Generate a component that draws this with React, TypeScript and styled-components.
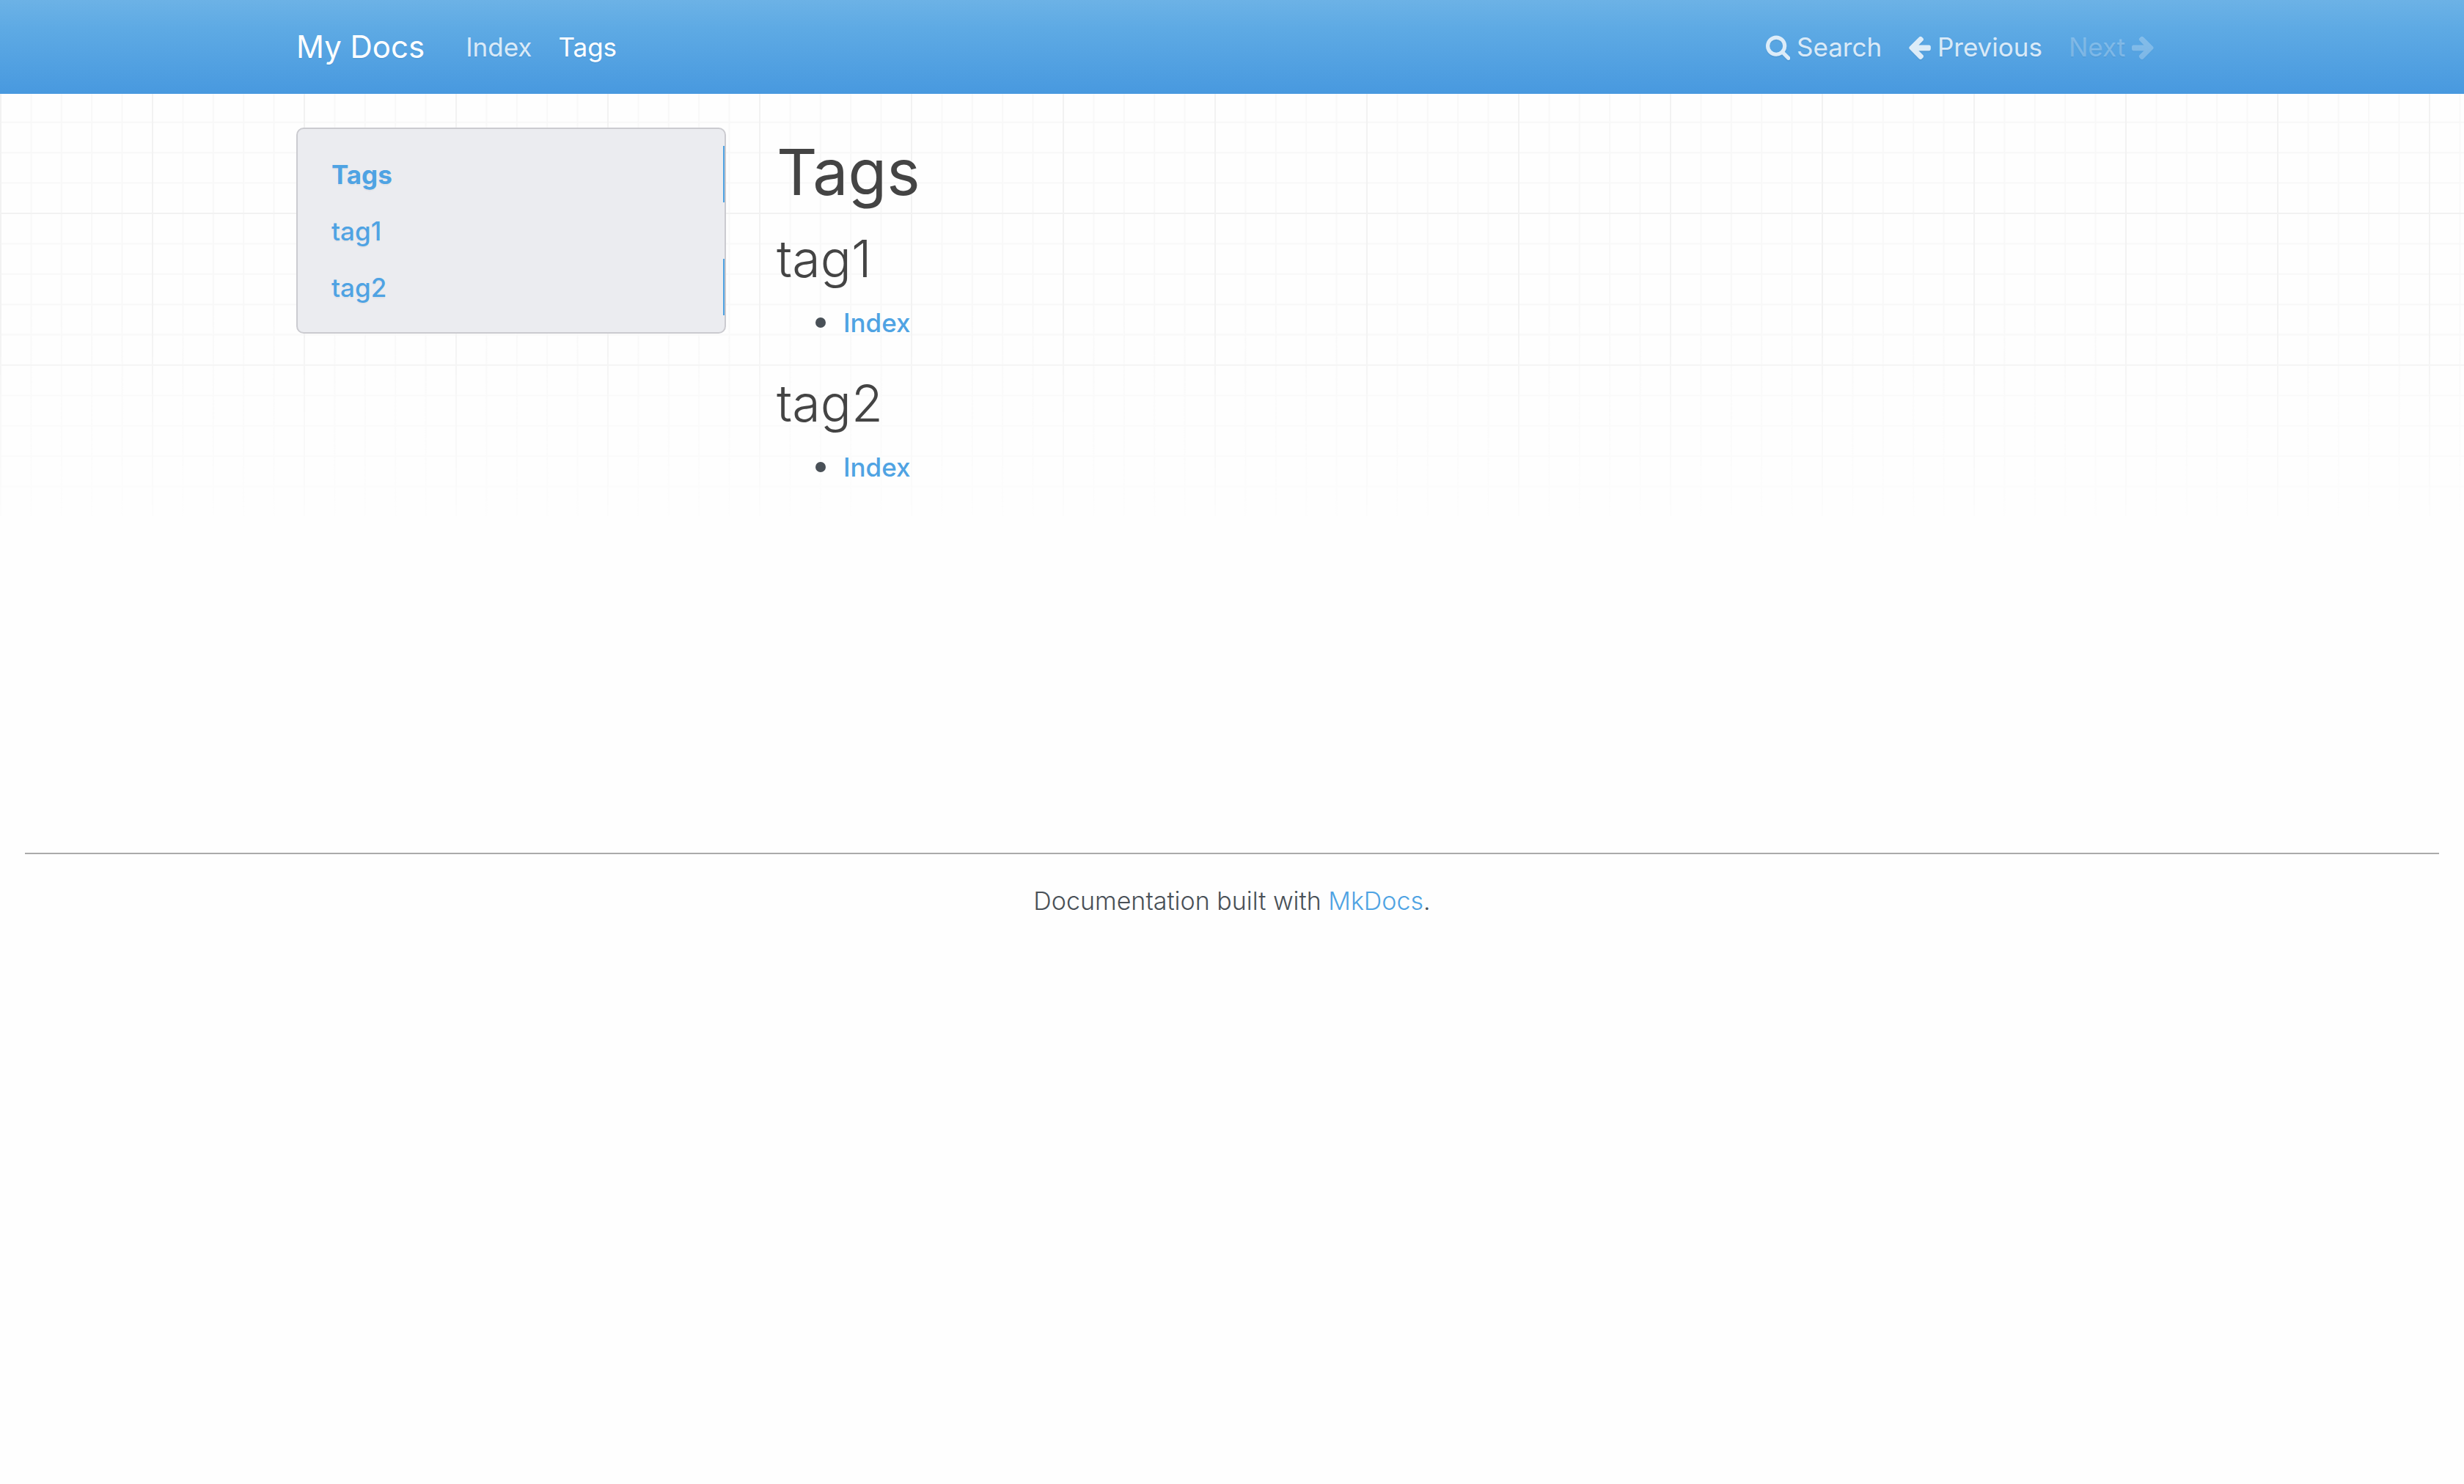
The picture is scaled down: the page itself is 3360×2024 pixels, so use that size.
import React from "react";
import styled, { createGlobalStyle } from "styled-components";

const accent = "#4fa3e3";

const GlobalStyle = createGlobalStyle`
  *, *::before, *::after { box-sizing: border-box; }
  body {
    margin: 0;
    background: #fefefe;
    color: #495057;
    font-family: Inter, "Liberation Sans", sans-serif;
    font-size: 35px;
    font-weight: 400;
    line-height: 56px;
  }
  a { color: ${accent}; text-decoration: none; }
`;

const Page = styled.div`
  position: relative;
`;

const GridBackdrop = styled.div`
  position: absolute;
  inset: 0 0 auto;
  z-index: -1;
  height: 704px;
  mask-image: linear-gradient(#000 60%, rgba(0, 0, 0, 0.15));
`;

const Container = styled.div`
  display: flex;
  width: 100%;
  max-width: 2620px;
  margin: 0 auto;
  padding: 0 34px;
`;

const Navbar = styled.header`
  display: flex;
  height: 128px;
  align-items: center;
  background: linear-gradient(#6cb2e6, #5eaae4 30%, #4899df);
  text-shadow: 0 2px 0 rgba(0, 0, 0, 0.05);
`;

const NavRow = styled(Container)`
  align-items: center;
`;

const Brand = styled.a`
  margin-right: 38px;
  font-size: 42px;
  color: #fff;
`;

const NavGroup = styled.nav<{ $end?: boolean }>`
  display: flex;
  margin-left: ${(p) => (p.$end ? "auto" : "0")};
`;

const NavLink = styled.a<{ $active?: boolean; $disabled?: boolean }>`
  display: flex;
  align-items: center;
  gap: 9px;
  padding: 0 18px;
  color: ${(p) =>
    p.$active ? "#fff" : p.$disabled ? "rgba(255, 255, 255, 0.25)" : "rgba(255, 255, 255, 0.8)"};
`;

const SearchButton = styled(NavLink).attrs({ as: "button", type: "button" })`
  border: 0;
  background: none;
  font: inherit;
  text-shadow: inherit;
`;

const Glyph = styled.svg`
  height: 36px;
  fill: currentColor;
  filter: drop-shadow(0 2px 0 rgba(0, 0, 0, 0.05));
`;

const Body = styled(Container)`
  align-items: flex-start;
  gap: 69px;
  min-height: 1035px;
  padding-top: 46px;
`;

const Sidebar = styled.nav`
  flex: 0 0 586px;
  padding: 23px 0;
  border: 2px solid #cbcbd0;
  border-radius: 10px;
  background: #ebecf0;
`;

const SideLink = styled.a<{ $strong?: boolean; $current?: boolean }>`
  display: block;
  padding: 11px 46px 10px;
  border-right: 2px solid ${(p) => (p.$current ? accent : "transparent")};
  font-weight: ${(p) => (p.$strong ? 700 : 500)};
  text-shadow: 0 2px 0 rgba(0, 0, 0, 0.05);
`;

const Main = styled.main`
  flex: 1;
  padding-top: 4px;
`;

const Title = styled.h1`
  margin: 0 0 18px;
  font-size: 86px;
  font-weight: 400;
  line-height: 114px;
  color: #444;
`;

const Subtitle = styled.h2`
  margin: 0 0 16px;
  font-size: 70px;
  font-weight: 300;
  line-height: 86px;
  color: #444;
`;

const PageList = styled.ul`
  margin: 0 0 39px;
  padding-left: 53px;
  list-style: none;
`;

const PageItem = styled.li`
  display: flex;
  align-items: center;
  gap: 24px;
  font-weight: 500;

  &::before {
    content: "";
    width: 14px;
    height: 14px;
    border-radius: 50%;
    background: currentColor;
  }
`;

const Footer = styled.footer`
  margin: 0 34px;
  padding-top: 36px;
  border-top: 2px solid #aaa;
  font-size: 34px;
  font-weight: 300;
  text-align: center;
`;

const tags = ["tag1", "tag2"];

function Grid() {
  return (
    <GridBackdrop>
      <svg width="100%" height="100%" aria-hidden="true">
        <defs>
          <pattern id="grid" y="83" width="207" height="207" patternUnits="userSpaceOnUse">
            <path
              d="M42.4 0V207M83.8 0V207M125.2 0V207M166.6 0V207M0 42.4H207M0 83.8H207M0 125.2H207M0 166.6H207"
              stroke="#f8f8f8"
              strokeWidth="2"
            />
            <path d="M1 0V207M0 1H207" stroke="#f2f2f2" strokeWidth="2" />
          </pattern>
        </defs>
        <rect width="100%" height="100%" fill="url(#grid)" />
      </svg>
    </GridBackdrop>
  );
}

function SearchGlyph() {
  return (
    <Glyph viewBox="0 0 1664 1792" aria-hidden="true">
      <path d="M1152 832q0-185-131.500-316.500T704 384 387.500 515.500 256 832t131.500 316.500T704 1280t316.500-131.500T1152 832zm512 832q0 52-38 90t-90 38q-54 0-90-38l-343-342q-179 124-399 124-143 0-273.500-55.500t-225-150-150-225T0 832t55.500-273.500 150-225 225-150T704 128t273.500 55.500 225 150 150 225T1408 832q0 220-124 399l343 343q37 37 37 90z" />
    </Glyph>
  );
}

function ArrowGlyph({ flip = false }: { flip?: boolean }) {
  return (
    <Glyph viewBox="0 0 1536 1792" aria-hidden="true">
      <path
        transform={flip ? "translate(1536 0) scale(-1 1)" : undefined}
        d="M1536 896v128q0 53-32.500 90.500T1419 1152H715l293 294q38 36 38 90t-38 90l-75 76q-37 37-90 37-52 0-91-37L101 1050Q64 1013 64 960q0-52 37-91l651-650q38-38 91-38 52 0 90 38l75 74q38 38 38 91t-38 91L715 768h704q52 0 84.500 37.500T1536 896z"
      />
    </Glyph>
  );
}

export default function App() {
  return (
    <Page>
      <GlobalStyle />
      <Grid />
      <Navbar>
        <NavRow>
          <Brand href="#">My Docs</Brand>
          <NavGroup>
            <NavLink href="#">Index</NavLink>
            <NavLink href="#" $active>Tags</NavLink>
          </NavGroup>
          <NavGroup $end>
            <SearchButton><SearchGlyph />Search</SearchButton>
            <NavLink href="#"><ArrowGlyph />Previous</NavLink>
            <NavLink $disabled aria-disabled="true">Next<ArrowGlyph flip /></NavLink>
          </NavGroup>
        </NavRow>
      </Navbar>
      <Body>
        <Sidebar>
          <SideLink href="#tags" $strong $current>Tags</SideLink>
          <SideLink href="#tag1">tag1</SideLink>
          <SideLink href="#tag2" $current>tag2</SideLink>
        </Sidebar>
        <Main>
          <Title id="tags">Tags</Title>
          {tags.map((tag) => (
            <section key={tag}>
              <Subtitle id={tag}>{tag}</Subtitle>
              <PageList>
                <PageItem><a href="#">Index</a></PageItem>
              </PageList>
            </section>
          ))}
        </Main>
      </Body>
      <Footer>
        Documentation built with <a href="#">MkDocs</a>.
      </Footer>
    </Page>
  );
}
